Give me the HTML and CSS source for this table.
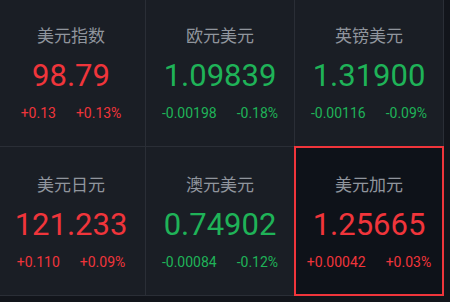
FILE: index.html
```html
<!DOCTYPE html>
<html lang="zh">
<head>
<meta charset="utf-8">
<link rel="stylesheet" href="styles.css">
</head>
<body>
<div class="board">
  <div class="cell">
    <div class="name">美元指数</div>
    <div class="price up">98.79</div>
    <div class="chg up"><span>+0.13</span><span>+0.13%</span></div>
  </div>
  <div class="cell">
    <div class="name">欧元美元</div>
    <div class="price down">1.09839</div>
    <div class="chg down"><span>-0.00198</span><span>-0.18%</span></div>
  </div>
  <div class="cell">
    <div class="name">英镑美元</div>
    <div class="price down">1.31900</div>
    <div class="chg down"><span>-0.00116</span><span>-0.09%</span></div>
  </div>
  <div class="cell">
    <div class="name">美元日元</div>
    <div class="price up">121.233</div>
    <div class="chg up"><span>+0.110</span><span>+0.09%</span></div>
  </div>
  <div class="cell">
    <div class="name">澳元美元</div>
    <div class="price down">0.74902</div>
    <div class="chg down"><span>-0.00084</span><span>-0.12%</span></div>
  </div>
  <div class="cell selected">
    <div class="name">美元加元</div>
    <div class="price up">1.25665</div>
    <div class="chg up"><span>+0.00042</span><span>+0.03%</span></div>
  </div>
</div>
</body>
</html>
```
FILE: styles.css
```css
html, body {
  margin: 0;
  padding: 0;
  background: #12151b;
  overflow: hidden;
}
body {
  width: 450px;
  height: 302px;
  font-family: Roboto, "Noto Sans CJK SC", sans-serif;
}
.board {
  display: grid;
  grid-template-columns: repeat(3, 148px);
  grid-template-rows: repeat(2, 148px);
  gap: 1px;
  padding: 0 1px 1px 0;
  background: #2a2e36;
  margin: -2px 0 0 -3px;
  width: max-content;
}
.cell {
  background: #1a1e25;
  display: flex;
  flex-direction: column;
  align-items: center;
  padding-top: 27px;
  box-sizing: border-box;
  position: relative;
}
.cell.selected {
  background: #0e1219;
  outline: 2px solid #f0353b;
  outline-offset: -1px;
}
.name {
  font-family: "Noto Sans CJK SC", sans-serif;
  font-size: 17px;
  line-height: 20px;
  color: #90959d;
}
.price {
  margin-top: 13px;
  font-size: 31px;
  line-height: 36px;
}
.chg {
  margin-top: 10px;
  font-size: 14px;
  line-height: 18px;
  display: flex;
  gap: 20px;
}
.up { color: #f0353b; }
.down { color: #1fb358; }
```
